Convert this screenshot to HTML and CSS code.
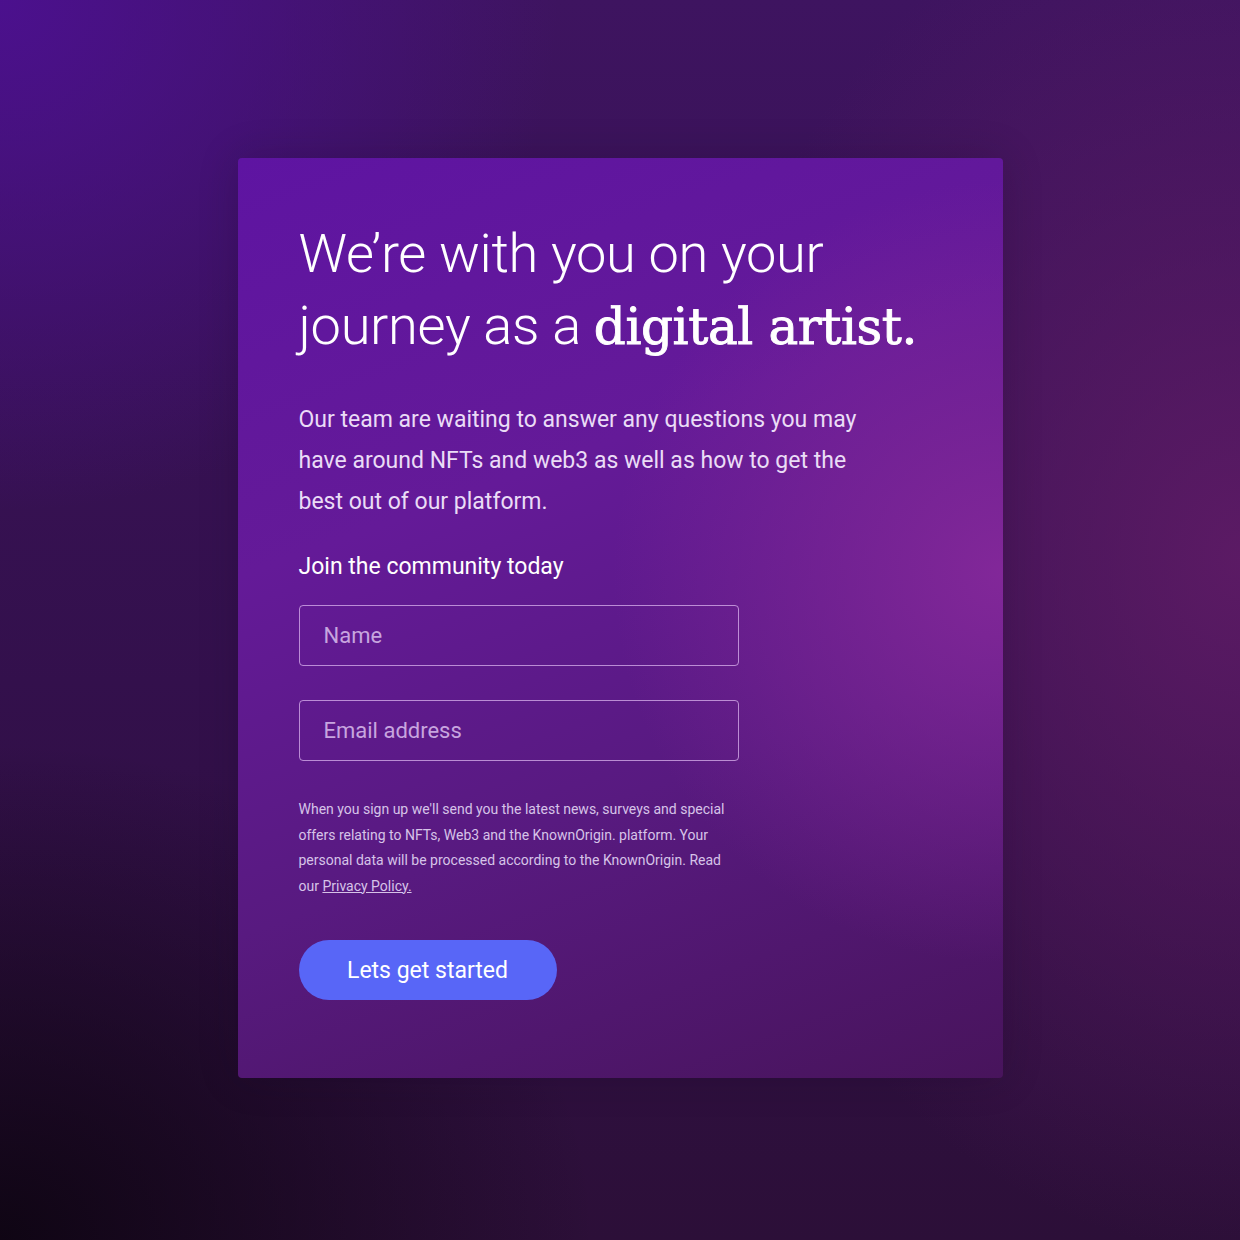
FILE: index.html
```html
<!DOCTYPE html>
<html lang="en">
<head>
    <meta charset="UTF-8">
    <meta name="viewport" content="width=device-width, initial-scale=1.0">
    <title>Join the community</title>
    <link rel="stylesheet" href="styles.css">
</head>
<body>

    <div class="card">
        <h1 class="headline">We’re with you on your journey as a <strong>digital artist.</strong></h1>

        <p class="intro">Our team are waiting to answer any questions you may have around NFTs and web3 as well as how to get the best out of our platform.</p>

        <form class="signup">
            <h2 class="signup-title">Join the community today</h2>
            <input class="field" type="text" placeholder="Name">
            <input class="field" type="email" placeholder="Email address">
            <p class="legal">When you sign up we'll send you the latest news, surveys and special offers relating to NFTs, Web3 and the KnownOrigin. platform. Your personal data will be processed according to the KnownOrigin. Read our <a href="#">Privacy Policy.</a></p>
            <button class="cta" type="button">Lets get started</button>
        </form>
    </div>

</body>
</html>
```

FILE: styles.css
```css
body, html {
    margin: 0;
    padding: 0;
    width: 100%;
    height: 100%;
}

body {
    font-family: Roboto, 'Liberation Sans', sans-serif;
    background-color: #2a0f3e;
    background-image:
        radial-gradient(ellipse 60% 55% at 0% 0%, rgba(76, 16, 144, 0.95), rgba(76, 16, 144, 0) 75%),
        radial-gradient(ellipse 55% 70% at 100% 45%, rgba(98, 28, 104, 0.85), rgba(98, 28, 104, 0) 80%),
        radial-gradient(ellipse 60% 50% at 0% 100%, rgba(12, 4, 16, 0.9), rgba(12, 4, 16, 0) 80%),
        linear-gradient(to bottom, #3e1460 0%, #33104c 55%, #2c0f38 100%);
    display: flex;
    justify-content: center;
    align-items: flex-start;
    box-sizing: border-box;
    padding-top: 158px;
}

.card {
    width: 765px;
    height: 920px;
    box-sizing: border-box;
    padding: 60px 61px 0;
    border-radius: 4px;
    color: #fff;
    background-image:
        radial-gradient(ellipse 60% 50% at 100% 45%, rgba(132, 40, 154, 0.95), rgba(132, 40, 154, 0) 85%),
        linear-gradient(160deg, #5e14a2 0%, #641a98 35%, #581a80 65%, #48145c 100%);
    box-shadow: 0 0 40px rgba(20, 0, 30, 0.2);
}

.headline {
    margin: 0;
    font-weight: 300;
    font-size: 54.2px;
    line-height: 72px;
    letter-spacing: -0.3px;
}

.headline strong {
    font-family: 'DejaVu Serif', 'Liberation Serif', serif;
    font-weight: normal;
    font-size: 50px;
    letter-spacing: -0.4px;
    -webkit-text-stroke: 0.9px #fff;
}

.intro {
    margin: 36px 0 0;
    font-size: 23px;
    line-height: 41px;
    color: #eadcf6;
    max-width: 575px;
}

.signup {
    margin-top: 30px;
    display: flex;
    flex-direction: column;
    align-items: flex-start;
}

.signup-title {
    margin: 0 0 23px;
    font-size: 23px;
    font-weight: 400;
    line-height: 30px;
}

.field {
    width: 440px;
    height: 61px;
    box-sizing: border-box;
    margin-bottom: 34px;
    padding: 0 24px;
    border: 1px solid rgba(226, 190, 245, 0.7);
    border-radius: 4px;
    background: transparent;
    font-family: inherit;
    font-size: 22px;
    color: #fff;
}

.field::placeholder {
    color: #c7a5df;
}

.legal {
    margin: 2px 0 0;
    width: 440px;
    font-size: 14px;
    line-height: 25.5px;
    color: #d6c3e8;
}

.legal a {
    color: inherit;
}

.cta {
    margin-top: 41px;
    width: 258px;
    height: 60px;
    border: none;
    border-radius: 30px;
    background-color: #5866f7;
    color: #fff;
    font-family: inherit;
    font-size: 23px;
    cursor: pointer;
}
```
